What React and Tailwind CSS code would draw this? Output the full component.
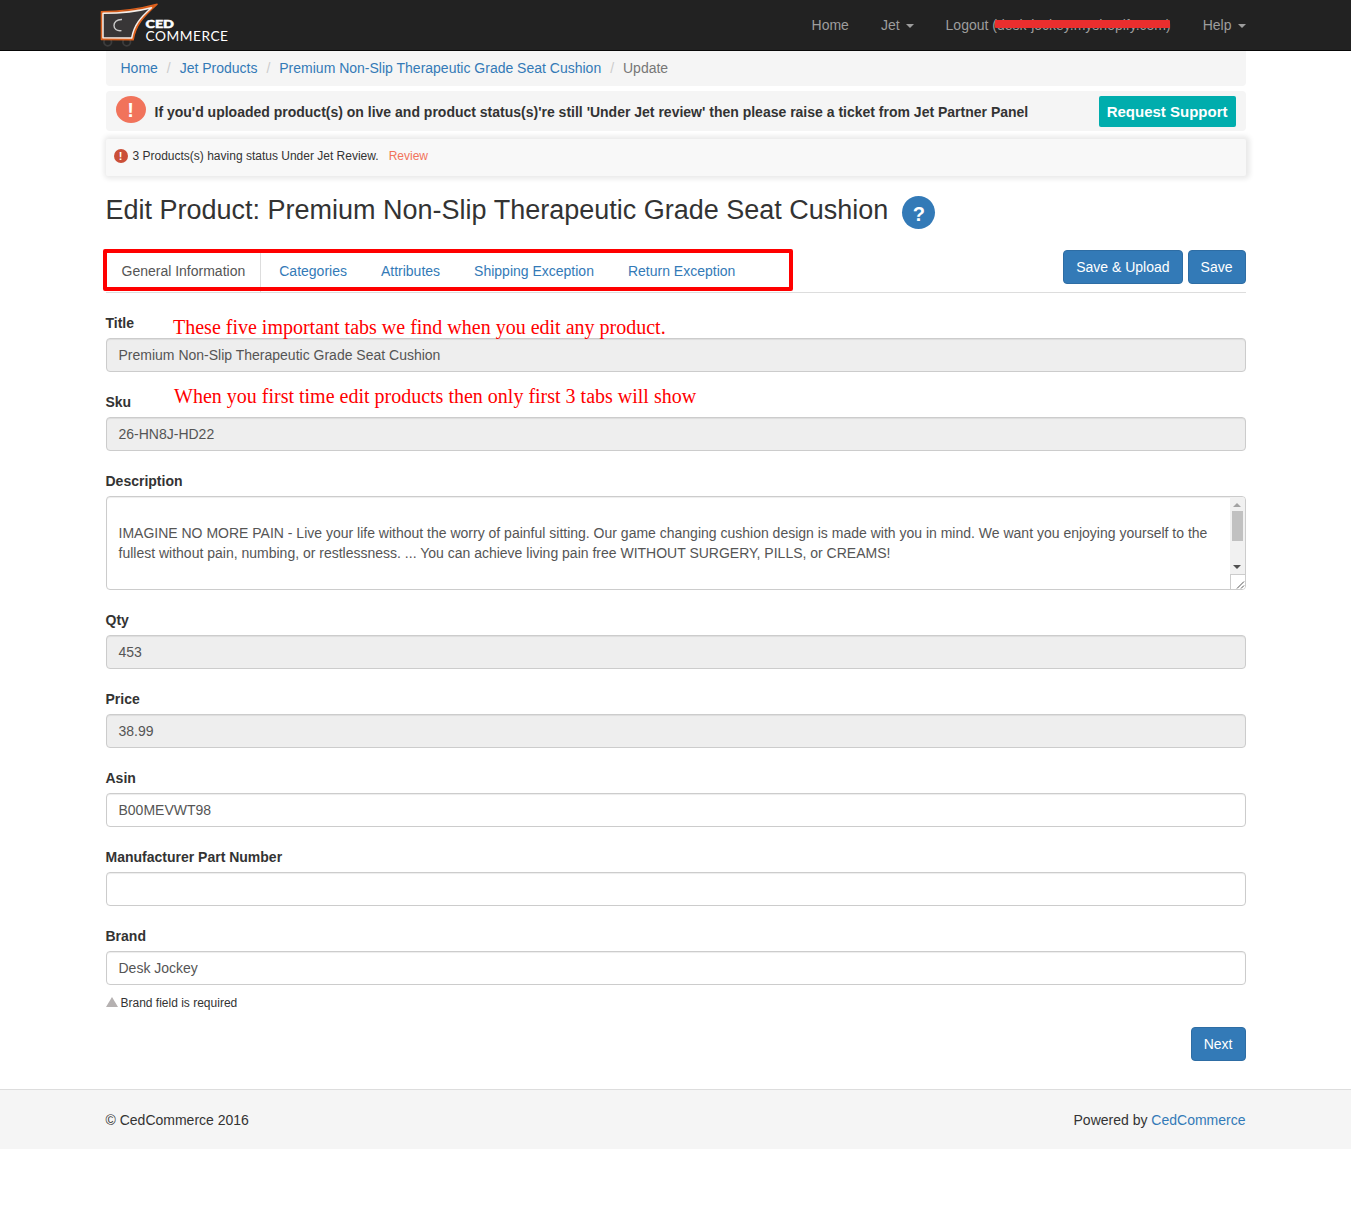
import React from "react";

const link = "text-[#337ab7]";

function Caret() {
  return (
    <span className="ml-1.5 inline-block h-0 w-0 border-x-4 border-t-4 border-x-transparent border-t-current align-middle" />
  );
}

function Logo() {
  return (
    <svg width="134" height="50" viewBox="0 0 134 50" className="-ml-[7.5px] block">
      <circle cx="9.700" cy="42" r="3.800" fill="none" stroke="#3c3c3c" strokeWidth="1.8" />
      <circle cx="28.700" cy="42" r="3.800" fill="none" stroke="#3c3c3c" strokeWidth="1.8" />
      <path d="M3.300 11.600 C25 11.600 40 9.500 59.200 4.200 C46 16 37.500 25 35.300 40 L3.300 39.600 Z" fill="#de611d" stroke="#de611d" strokeWidth="1.200" strokeLinejoin="round" />
      <path d="M5 13.300 C25 13.300 38 12 53.500 7.800 C42 18 36 25 33.700 38 L5 37.700 Z" fill="#383637" stroke="#f3eeea" strokeWidth="1.500" strokeLinejoin="round" />
      <path d="M24 19.500 C18.500 19.300 16 22.500 16 25.500 C16 28.800 18.500 31.200 23.500 30.600" fill="none" stroke="#c9c9c9" strokeWidth="1.400" />
      <text x="47.500" y="28" fill="#fff" stroke="#fff" strokeWidth="0.5" fontFamily="Lato, sans-serif" fontWeight="900" fontSize="11.500" textLength="28.500" lengthAdjust="spacingAndGlyphs">CED</text>
      <text x="47.500" y="41" fill="#fff" fontFamily="Lato, sans-serif" fontSize="13.500" letterSpacing="0.5" textLength="83" lengthAdjust="spacingAndGlyphs">COMMERCE</text>
    </svg>
  );
}

function Navbar() {
  return (
    <nav className="h-[51px] border-b border-[#080808] bg-[#222]">
      <div className="mx-auto flex h-[50px] w-[1140px] items-center justify-between text-[#9d9d9d]">
        <Logo />
        <div className="flex gap-8">
          <a>Home</a>
          <a>Jet<Caret /></a>
          <a>
            Logout{" "}
            <span className="relative">
              (desk-jockey.myshopify.com)
              <span className="absolute top-[3px] left-[2.500px] h-2 w-[175px] rounded-[1px] bg-[#ea2e2e]" />
            </span>
          </a>
          <a>Help<Caret /></a>
        </div>
      </div>
    </nav>
  );
}

function Breadcrumb() {
  const sep = <span className="w-[21.800px] text-center text-[#ccc]">/</span>;
  return (
    <div className="flex h-[35px] rounded-b bg-[#f5f5f5] px-[15px] pt-[7px]">
      <a className={link}>Home</a>{sep}
      <a className={link}>Jet Products</a>{sep}
      <a className={link}>Premium Non-Slip Therapeutic Grade Seat Cushion</a>{sep}
      <span className="text-[#777]">Update</span>
    </div>
  );
}

function Button({ children }) {
  return (
    <button className="h-[34px] rounded border border-[#2e6da4] bg-[#337ab7] px-3 text-white">{children}</button>
  );
}

function Field({ label, value, disabled }) {
  return (
    <div className="mb-5">
      <label className="mb-[5px] block font-bold">{label}</label>
      <div className={`h-[34px] rounded border border-[#ccc] px-3 py-1.5 text-[#555] shadow-[inset_0_1px_1px_rgba(0,0,0,0.075)] ${disabled ? "bg-[#eee]" : "bg-white"}`}>
        {value}
      </div>
    </div>
  );
}

function Description() {
  return (
    <div className="mb-5">
      <label className="mb-[5px] block font-bold">Description</label>
      <div className="flex h-[94px] overflow-hidden rounded border border-[#ccc] text-[#555] shadow-[inset_0_1px_1px_rgba(0,0,0,0.075)]">
        <p className="flex-1 pt-[26px] pr-3 pl-3">
          IMAGINE NO MORE PAIN - Live your life without the worry of painful sitting. Our game changing cushion design is made with you in mind. We want you enjoying yourself to the fullest without pain, numbing, or restlessness. ... You can achieve living pain free WITHOUT SURGERY, PILLS, or CREAMS!
        </p>
        <div className="flex w-[15px] shrink-0 flex-col">
          <div className="flex h-[77px] flex-col items-center bg-[#f1f1f1]">
            <span className="mt-[6px] h-0 w-0 border-x-4 border-b-4 border-x-transparent border-b-[#a3a3a3]" />
            <span className="mt-1 h-[30px] w-[11px] bg-[#c1c1c1]" />
            <span className="mt-6 h-0 w-0 border-x-4 border-t-4 border-x-transparent border-t-[#505050]" />
          </div>
          <svg width="14" height="14" viewBox="0 0 14 14" className="box-content border-t border-l border-[#ccc] bg-white">
            <path d="M6 13.500 L13 6.500 M10 13.500 L13 10.500" stroke="#555" strokeWidth="1" />
          </svg>
        </div>
      </div>
    </div>
  );
}

function Tabs() {
  return (
    <div className="relative flex h-[43px] items-start justify-between border-b border-[#ddd]">
      <div className="flex gap-[2px]">
        <a className="h-[42px] border-r border-[#ddd] py-[11px] pr-[15px] pl-4 text-[#555]">General Information</a>
        {["Categories", "Attributes", "Shipping Exception", "Return Exception"].map((t) => (
          <a key={t} className="px-4 py-[11px] text-[#337ab7]">{t}</a>
        ))}
      </div>
      <div className="flex gap-[5px]">
        <Button>Save &amp; Upload</Button>
        <Button>Save</Button>
      </div>
      <div className="absolute -top-px -left-[2.500px] h-[42px] w-[690px] rounded-[2px] border-4 border-[#f00]" />
    </div>
  );
}

function Note({ className, children }) {
  return (
    <span className={`absolute whitespace-nowrap font-['Liberation_Serif',serif] text-[20px] leading-6 text-[#f00] ${className}`}>
      {children}
    </span>
  );
}

export default function App() {
  return (
    <div className="bg-white font-['Liberation_Sans',Arial,sans-serif] text-[14px] leading-5 text-[#333]">
      <Navbar />
      <main className="mx-auto h-[1038px] w-[1140px]">
        <Breadcrumb />
        <section className="mt-[5px] flex h-10 items-start rounded bg-[#f5f5f5] px-2.5 pt-[5px]">
          <span className="flex h-[27px] w-[30px] items-center justify-center rounded-[50%] bg-[#f1735b] text-[20px] font-bold text-white">!</span>
          <strong className="mt-[6px] ml-[9px] flex-1">If you'd uploaded product(s) on live and product status(s)'re still 'Under Jet review' then please raise a ticket from Jet Partner Panel</strong>
          <button className="h-[31px] rounded-[2px] bg-[#00adad] px-2 text-[15px] font-bold text-white">Request Support</button>
        </section>
        <section className="mt-2 flex h-[37px] items-start rounded-[2px] bg-[#f8f8f8] px-2 pt-[7px] text-[12px] shadow-[1px_0_5px_3px_#eaeaea]">
          <span className="mt-[3px] flex h-[14px] w-[14px] items-center justify-center rounded-full bg-[#cb4f38] text-[11px] font-bold text-white">!</span>
          <span className="ml-[5px]">3 Products(s) having status Under Jet Review.</span>
          <a className="ml-2.5 text-[#f1735b]">Review</a>
        </section>
        <h1 className="mt-5 flex h-[33px] text-[27px] leading-7">
          Edit Product: Premium Non-Slip Therapeutic Grade Seat Cushion
          <span className="ml-[14px] flex h-[33px] w-[33px] items-center justify-center rounded-full bg-[#337ab7] pt-[3px] text-[20px] font-bold text-white">?</span>
        </h1>
        <div className="mt-[21px]"><Tabs /></div>
        <form className="relative pt-5">
          <Note className="top-[22px] left-[67.500px]">These five important tabs we find when you edit any product.</Note>
          <Note className="top-[91px] left-[68.500px]">When you first time edit products then only first 3 tabs will show</Note>
          <Field label="Title" value="Premium Non-Slip Therapeutic Grade Seat Cushion" disabled />
          <Field label="Sku" value="26-HN8J-HD22" disabled />
          <Description />
          <Field label="Qty" value="453" disabled />
          <Field label="Price" value="38.99" disabled />
          <Field label="Asin" value="B00MEVWT98" />
          <Field label="Manufacturer Part Number" />
          <Field label="Brand" value="Desk Jockey" />
          <div className="-mt-[12px] flex h-5 gap-[3px] text-[12px]">
            <span className="mt-1 h-0 w-0 border-x-6 border-b-10 border-x-transparent border-b-[#b5b1b1]" />
            Brand field is required
          </div>
          <div className="mt-[14px] flex justify-end"><Button>Next</Button></div>
        </form>
      </main>
      <footer className="h-[60px] border-t border-[#ddd] bg-[#f5f5f5] pt-5">
        <div className="mx-auto flex w-[1140px] justify-between">
          <span>© CedCommerce 2016</span>
          <span>Powered by <a className={link}>CedCommerce</a></span>
        </div>
      </footer>
    </div>
  );
}
